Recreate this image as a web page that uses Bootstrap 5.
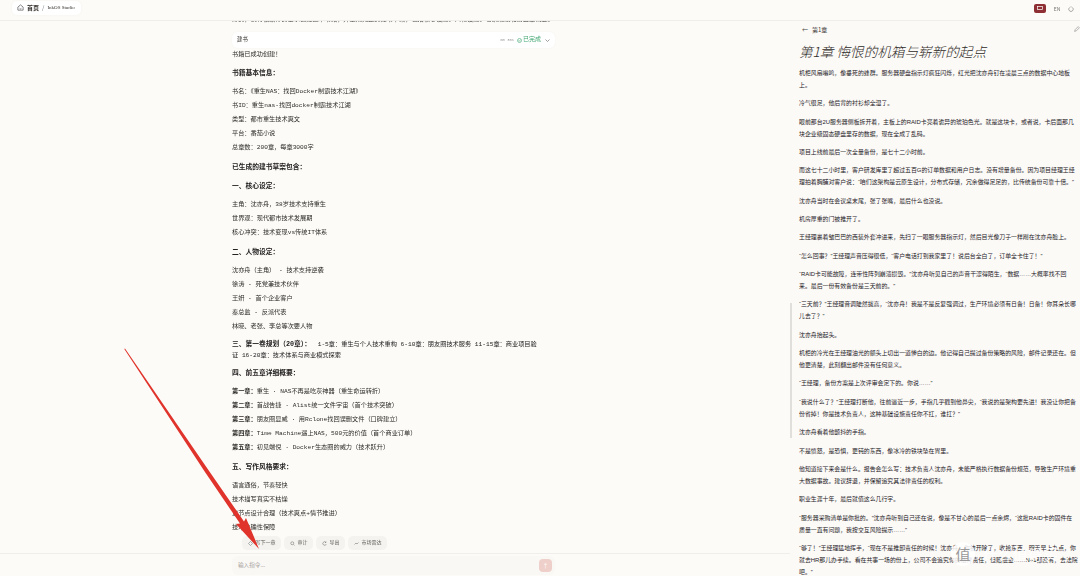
<!DOCTYPE html>
<html lang="zh">
<head>
<meta charset="utf-8">
<title>InkOS Studio</title>
<link href="https://cdn.jsdelivr.net/npm/bootstrap@5.3.0/dist/css/bootstrap.min.css" rel="stylesheet">
<style>
html,body{height:100%;overflow:hidden}
body{background:#fcfbf8;color:#37332f;font-family:"Noto Sans CJK SC",sans-serif}
.shell{height:576px;position:relative;filter:blur(.3px)}
.topbar{height:21px;border-bottom:1px solid #efeeea;flex:none}
.crumb{margin:0 0 5px 12px;height:14px;padding:0 6px 0 5px;border-radius:5px;background:#fff;font-size:6px;gap:3px;box-shadow:0 0 3px #f3f2ee}
.crumb b{font-weight:700}
.crumbname{font-family:"Liberation Serif",serif;font-size:5px}
.langbox{margin-bottom:3px;gap:3px;padding-right:6px}
.lang-on{width:12px;height:9px;border-radius:2px;background:#8e2f33}
.lang-off{font-size:5px;color:#77736e;width:16px;text-align:center}
.mainpane{width:790px;flex:none;min-height:0}
.chatscroll{min-height:0;justify-content:flex-end;padding-left:232px;padding-right:235px}
.chatbody{font:6.2px/14px "Liberation Mono","Noto Sans CJK SC",monospace;color:#2f2c29;margin:0}
.chatbody p{margin:0;white-space:nowrap}
.chatbody b{font-weight:700}
.chatbody h6{font:700 6.75px/14px "Liberation Mono","Noto Sans CJK SC",monospace;margin:5px 0;color:#242120}
.chatbody .wrapline{white-space:normal;font:400 6.2px/11px "Liberation Mono","Noto Sans CJK SC",monospace;margin:5px 0;width:306px}
.chatbody .wrapline b{font-size:6.75px;margin-right:3px}
.clipline{line-height:10px;white-space:nowrap;color:#4a4641}
.toolcard{height:16px;margin:7px 0 0;background:#fff;border-radius:6px;padding:0 5px;font-size:5.4px;box-shadow:0 0 2px #f3f1ec}
.toolcard .oktext{color:#3fa56f;font-size:6px;gap:1px}
.toolcard .tsmall{font-size:3.8px;color:#999;margin-right:3px}
.chipline{height:16px;gap:3px;margin:1px 0 1px 10px}
.chipbtn{height:14px;padding:0 5.500px;border-radius:5px;background:#f4f3ef;font-size:5px;color:#5e5a55;gap:3px;border:0;flex:none}
.inputbar{height:23px;border-top:1px solid #efeeea;flex:none;padding:2px 235px 0 232px}
.inputbox{height:19px;background:#faf8f5;border-radius:6px;padding:0 3px 0 6px;font-size:5.6px;color:#a5a19b}
.sendbtn{width:13px;height:13px;border-radius:4px;background:#efcfc9;color:#fff;font-size:6px;line-height:13px;text-align:center}
.readpane{background:#fcfaf7;min-width:0}
.readhead{height:16px;flex:none;padding:0 0 0 12px;font-size:6px;color:#45413c}
.readtext{padding:0 2px 0 9px}
.chaptitle{font:italic 300 13.6px/20px "Noto Sans CJK SC",serif;margin:4px 0 6px;color:#2f2b28;white-space:nowrap}
.readtext p{font-family:"Liberation Sans","Noto Sans CJK SC",sans-serif;font-size:5.9px;line-height:12px;margin:0 0 6.35px;color:#24211f}
.scrollmark{left:790px;top:303px;width:2px;height:135px;background:#e0dfdc}
.arrowlay{left:0;top:0;pointer-events:none}
.wmark{left:951px;top:542px;gap:8px;color:rgba(255,255,255,.9);font-size:15px;line-height:24px;white-space:nowrap}
.wmarkdisc{width:24px;height:24px;border-radius:50%;background:rgba(255,255,255,.85);color:#999;text-align:center;line-height:24px;font-size:15px}
</style>
</head>
<body>
<div class="shell d-flex flex-column">
  <header class="topbar d-flex align-items-center justify-content-between">
    <div class="crumb d-flex align-items-center">
      <svg width="7" height="7" viewBox="0 0 16 16" fill="none" stroke="#555" stroke-width="1.6"><path d="M2 7l6-5 6 5v7H2zM6 10c1 1.5 3 1.5 4 0"/></svg>
      <b>首页</b><span class="text-secondary">/</span><span class="crumbname">InkOS Studio</span>
    </div>
    <div class="langbox d-flex align-items-center">
      <span class="lang-on d-flex align-items-center justify-content-center"><svg width="6" height="5" viewBox="0 0 6 5"><rect x=".5" y=".5" width="5" height="3" fill="none" stroke="#fff" stroke-width=".7"/></svg></span>
      <span class="lang-off">EN</span>
      <svg width="6" height="6" viewBox="0 0 16 16" fill="none" stroke="#77736e" stroke-width="1.6"><path d="M8 1v3M4 4a6 6 0 1 0 8 0"/></svg>
    </div>
  </header>
  <div class="d-flex flex-grow-1" style="min-height:0">
    <main class="mainpane d-flex flex-column">
      <div class="chatscroll d-flex flex-column flex-grow-1 overflow-hidden">
        <div class="chatbody">
          <p class="clipline">好的，我将根据你的要求创建这本书籍，并生成完整的建书草案，包括核心设定、人物设定、卷纲规划和前五章概要。</p>
          <div class="toolcard d-flex align-items-center justify-content-between">
            <span>建书</span>
            <span class="d-flex align-items-center"><span class="tsmall">8m 30s</span><span class="oktext d-flex align-items-center me-1"><svg width="5" height="5" viewBox="0 0 10 10" fill="none" stroke="#3fa56f" stroke-width="1.2"><circle cx="5" cy="5" r="4"/><path d="M3 5l1.500 1.500L7 3.500"/></svg>已完成</span><svg width="5" height="5" viewBox="0 0 10 10" fill="none" stroke="#777" stroke-width="1.4"><path d="M1 3l4 4 4-4"/></svg></span>
          </div>
          <p>书籍已成功创建！</p>
          <h6 class="mt-1">书籍基本信息：</h6>
          <p>书名：《重生NAS：找回Docker制霸技术江湖》</p>
          <p>书ID：重生nas-找回docker制霸技术江湖</p>
          <p>类型：都市重生技术爽文</p>
          <p>平台：番茄小说</p>
          <p>总章数：200章，每章3000字</p>
          <h6>已生成的建书草案包含：</h6>
          <h6>一、核心设定：</h6>
          <p>主角：沈亦舟，38岁技术支持重生</p>
          <p>世界观：现代都市技术发展期</p>
          <p>核心冲突：技术变现vs传统IT体系</p>
          <h6>二、人物设定：</h6>
          <p>沈亦舟（主角） - 技术支持逆袭</p>
          <p>徐涛 - 死党兼技术伙伴</p>
          <p>王妍 - 首个企业客户</p>
          <p>秦总监 - 反派代表</p>
          <p>林晓、老张、李总等次要人物</p>
          <h6 class="wrapline"><b>三、第一卷规划（20章）：</b> 1-5章：重生与个人技术重构 6-10章：朋友圈技术服务 11-15章：商业项目验证 16-20章：技术体系与商业模式探索</h6>
          <h6>四、前五章详细概要：</h6>
          <p><b>第一章：</b>重生 · NAS不再是吃灰神器（重生命运转折）</p>
          <p><b>第二章：</b>首战告捷 · Alist统一文件宇宙（首个技术突破）</p>
          <p><b>第三章：</b>朋友圈显威 · 用Rclone找回误删文件（口碑建立）</p>
          <p><b>第四章：</b>Time Machine遇上NAS，500元的价值（首个商业订单）</p>
          <p><b>第五章：</b>初见端倪 · Docker生态圈的威力（技术跃升）</p>
          <h6>五、写作风格要求：</h6>
          <p>语言通俗，节奏轻快</p>
          <p>技术描写真实不枯燥</p>
          <p>章节点设计合理（技术爽点+情节推进）</p>
          <p>技术准确性保障</p>
          <div class="chipline d-flex">
            <button class="chipbtn d-flex align-items-center"><svg width="5" height="5" viewBox="0 0 10 10" fill="none" stroke="#666"><path d="M5 1l4 4-4 4-4-4z"/></svg>写下一章</button>
            <button class="chipbtn d-flex align-items-center"><svg width="5" height="5" viewBox="0 0 10 10" fill="none" stroke="#666"><circle cx="4.500" cy="4.500" r="3"/><path d="M7 7l2 2"/></svg>审计</button>
            <button class="chipbtn d-flex align-items-center"><svg width="5" height="5" viewBox="0 0 10 10" fill="none" stroke="#666"><path d="M8 3a3.500 3.500 0 1 0 .5 3M8 1v2H6"/></svg>导出</button>
            <button class="chipbtn d-flex align-items-center"><svg width="5" height="5" viewBox="0 0 10 10" fill="none" stroke="#666"><path d="M1 7l3-3 2 2 3-3"/></svg>市场雷达</button>
          </div>
        </div>
      </div>
      <div class="inputbar">
        <div class="inputbox d-flex align-items-center justify-content-between"><span>输入指令...</span><span class="sendbtn">↑</span></div>
      </div>
    </main>
    <aside class="readpane flex-grow-1 d-flex flex-column overflow-hidden">
      <div class="readhead d-flex align-items-center justify-content-between">
        <span class="d-flex align-items-center gap-1"><span>←</span><span>第1章</span></span>
        <svg width="6" height="6" viewBox="0 0 10 10" fill="none" stroke="#888"><path d="M1 9l1-3 5-5 2 2-5 5z"/></svg>
      </div>
      <div class="readtext">
        <h1 class="chaptitle">第1章 悔恨的机箱与崭新的起点</h1>
        <p>机柜风扇嗡鸣，像垂死的蜂群。服务器硬盘指示灯疯狂闪烁，红光把沈亦舟钉在凌晨三点的数据中心地板上。</p>
        <p>冷气很足，他后背的衬衫却全湿了。</p>
        <p>眼前那台2U服务器侧板拆开着，主板上的RAID卡亮着诡异的琥珀色光。就是这块卡，或者说，卡后面那几块企业级固态硬盘里存的数据，现在全成了乱码。</p>
        <p>项目上线前最后一次全量备份，是七十二小时前。</p>
        <p>而这七十二小时里，客户研发库里了超过五百G的订单数据和用户日志。没有增量备份。因为项目经理王经理拍着胸脯对客户说：“咱们这架构是云原生设计，分布式存储，冗余做得足足的，比传统备份可靠十倍。”</p>
        <p>沈亦舟当时在会议桌末尾，张了张嘴，最后什么也没说。</p>
        <p>机房厚重的门被推开了。</p>
        <p>王经理裹着皱巴巴的西装外套冲进来，先扫了一眼服务器指示灯，然后目光像刀子一样剐在沈亦舟脸上。</p>
        <p>“怎么回事？”王经理声音压得很低，“客户电话打到我家里了！说后台全白了，订单全卡住了！”</p>
        <p>“RAID卡可能故障，连带性阵列崩溃损毁。”沈亦舟听见自己的声音干涩得陌生，“数据……大概率找不回来。最后一份有效备份是三天前的。”</p>
        <p>“三天前？”王经理音调陡然拔高，“沈亦舟！我是不是反复强调过，生产环境必须有日备！日备！你耳朵长哪儿去了？”</p>
        <p>沈亦舟抬起头。</p>
        <p>机柜的冷光在王经理油光的额头上切出一道惨白的边。他记得自己提过备份策略的风险，邮件记录还在。但他更清楚，此刻翻出邮件没有任何意义。</p>
        <p>“王经理，备份方案是上次评审会定下的。你说……”</p>
        <p>“我说什么了？”王经理打断他，往前逼近一步，手指几乎戳到他鼻尖，“我说的是架构要先进！我没让你把备份省掉！你是技术负责人，这种基础设施责任你不扛，谁扛？”</p>
        <p>沈亦舟看着他颤抖的手指。</p>
        <p>不是愤怒，是恐惧，更钝的东西，像冰冷的铁块坠在胃里。</p>
        <p>他知道接下来会是什么。报告会怎么写：技术负责人沈亦舟，未能严格执行数据备份规范，导致生产环境重大数据事故。建议辞退，并保留追究其法律责任的权利。</p>
        <p>职业生涯十年，最后就值这么几行字。</p>
        <p>“服务器采购清单是你批的。”沈亦舟听到自己还在说，像是不甘心的最后一点余烬，“这批RAID卡的固件在质量一直有问题，我按交互风险提示……”</p>
        <p>“够了！”王经理猛地挥手，“现在不是推卸责任的时候！沈亦舟，你被开除了，收拾东西，明天早上九点，你就去HR那儿办手续。看在共事一场的份上，公司不会追究你的法律责任，但赔偿金……N+1都没有，去法院吧。”</p>
      </div>
    </aside>
  </div>
  <div class="scrollmark position-absolute"></div>
  <svg class="arrowlay position-absolute" width="1080" height="576" viewBox="0 0 1080 576">
    <path d="M124.300 349 L125 348.500 L207.700 468.900 L244 521.500 L246 518 L259 549 L236 524 L240 523.500 L204.300 471.100 Z" fill="#e0332b"/>
  </svg>
  <div class="wmark position-absolute d-flex align-items-center"><span class="wmarkdisc">值</span><span>什么值得买</span></div>
</div>
<script src="https://cdn.jsdelivr.net/npm/bootstrap@5.3.0/dist/js/bootstrap.bundle.min.js"></script>
</body>
</html>
